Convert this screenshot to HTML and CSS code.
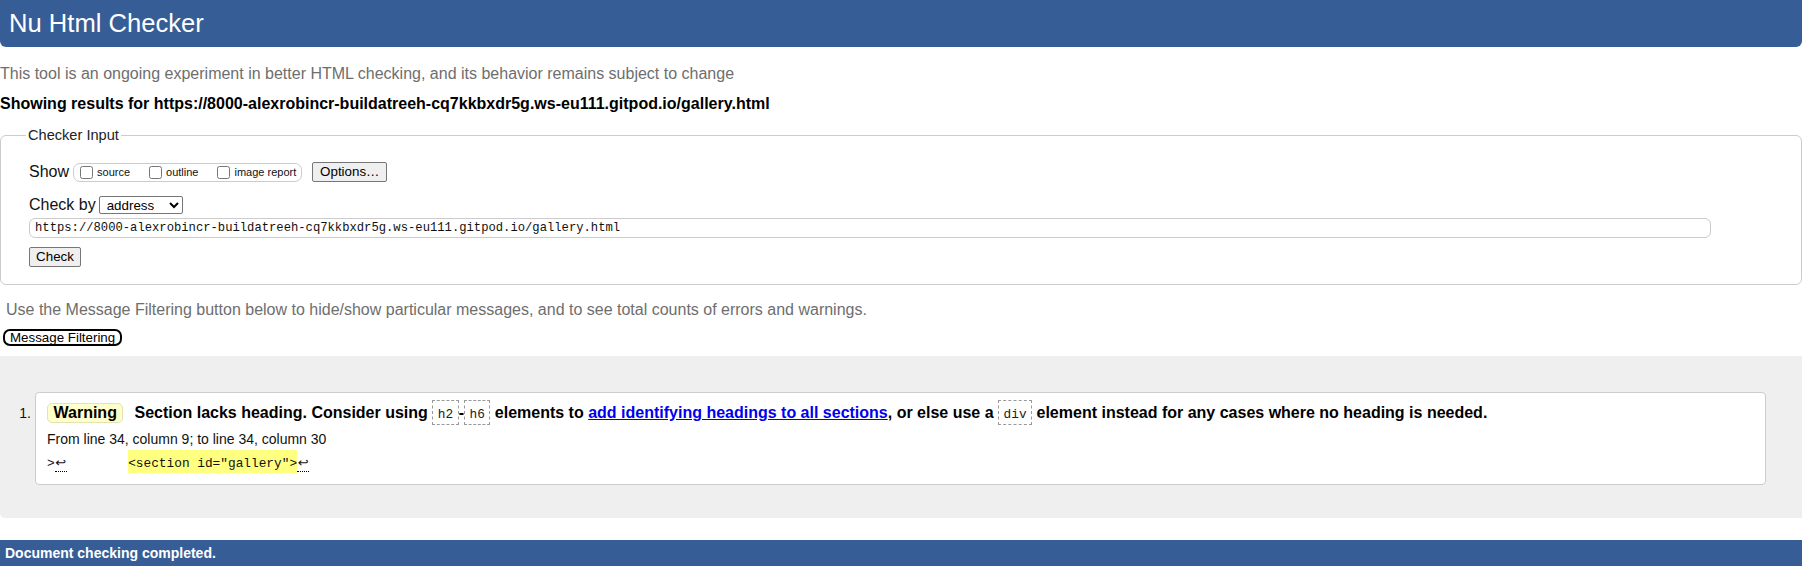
FILE: index.html
```html
<!DOCTYPE html>
<html lang="en">
<head>
<meta charset="utf-8">
<title>Showing results for gallery.html - Nu Html Checker</title>
<link rel="stylesheet" href="styles.css">
</head>
<body>
<h1 class="brand">Nu Html Checker</h1>
<p class="intro">This tool is an ongoing experiment in better HTML checking, and its behavior remains subject to change</p>
<p class="results-for">Showing results for https://8000-alexrobincr-buildatreeh-cq7kkbxdr5g.ws-eu111.gitpod.io/gallery.html</p>
<form class="checker" action="#">
  <fieldset class="checker-input">
    <legend class="legend">Checker Input</legend>
    <div class="row row-show">
      <span class="row-label">Show</span>
      <span class="show-group">
        <label class="opt"><input type="checkbox" class="cb"><span>source</span></label>
        <label class="opt"><input type="checkbox" class="cb"><span>outline</span></label>
        <label class="opt"><input type="checkbox" class="cb"><span>image report</span></label>
      </span>
      <button type="button" class="btn btn-options">Options…</button>
    </div>
    <div class="row row-by">
      <span class="row-label">Check by</span>
      <select class="by-select"><option>address</option></select>
    </div>
    <input class="url" type="text" value="https://8000-alexrobincr-buildatreeh-cq7kkbxdr5g.ws-eu111.gitpod.io/gallery.html">
    <button type="button" class="btn btn-check">Check</button>
  </fieldset>
</form>
<p class="filter-note">Use the Message Filtering button below to hide/show particular messages, and to see total counts of errors and warnings.</p>
<button type="button" class="filter-btn">Message Filtering</button>
<section class="results">
  <ol class="messages">
    <li class="message-row">
      <span class="num">1.</span>
      <div class="message">
        <p class="msg"><strong class="badge">Warning</strong> <span>Section lacks heading. Consider using <code class="code">h2</code>-<code class="code">h6</code> elements to <a class="link" href="#">add identifying headings to all sections</a>, or else use a <code class="code">div</code> element instead for any cases where no heading is needed.</span></p>
        <p class="loc">From line 34, column 9; to line 34, column 30</p>
        <p class="extract"><code class="extract-code">&gt;<span class="lf">↩</span>        <mark class="hl">&lt;section id="gallery"&gt;</mark><span class="lf">↩</span></code></p>
      </div>
    </li>
  </ol>
</section>
<p class="footer">Document checking completed.</p>
</body>
</html>
```
FILE: styles.css
```css
html, body {
  margin: 0;
  padding: 0;
}

body {
  font-family: "Liberation Sans", Arial, sans-serif;
  color: #000;
  background: #fff;
  overflow: hidden;
}

.brand {
  margin: 0;
  height: 47px;
  line-height: 47px;
  padding: 0 9px;
  font-size: 25.6px;
  font-weight: normal;
  color: #fff;
  background: #365d95;
  border-radius: 0 0 6px 6px;
}

.intro {
  margin: 18px 0 0;
  font-size: 16px;
  line-height: 18px;
  color: #6e6e6e;
}

.results-for {
  margin: 12px 0 0;
  font-size: 16px;
  line-height: 18px;
  font-weight: bold;
}

.checker {
  margin: 14px 0 0;
}

.checker-input {
  margin: 0;
  padding: 18px 28px 17px;
  border: 1px solid #ccc;
  border-radius: 6px;
  min-width: 0;
}

.legend {
  margin-left: -3px;
  padding: 0 2px;
  font-size: 14.6px;
  line-height: 17px;
  color: #222;
}

.row {
  display: flex;
  align-items: center;
}

.row-show {
  height: 20px;
}

.row-by {
  height: 18px;
  margin-top: 14px;
}

.row-label {
  font-size: 16px;
  line-height: 18px;
  color: #111;
}

.show-group {
  display: inline-flex;
  align-items: center;
  gap: 19px;
  box-sizing: border-box;
  height: 19px;
  margin-left: 4px;
  padding: 0 5px 0 6px;
  border: 1px solid #ccc;
  border-radius: 7px;
}

.opt {
  display: inline-flex;
  align-items: center;
  gap: 4px;
  font-size: 11px;
  line-height: 13px;
  color: #111;
}

.cb {
  width: 13px;
  height: 13px;
  margin: 0;
}

.btn {
  box-sizing: border-box;
  height: 20px;
  padding: 0 6px;
  font-family: "Liberation Sans", Arial, sans-serif;
  font-size: 13.33px;
  line-height: 16px;
  color: #000;
  background: #efefef;
  border: 1px solid #767676;
  border-radius: 2px;
}

.btn-options {
  width: 75px;
  margin-left: 10px;
}

.by-select {
  box-sizing: border-box;
  width: 84px;
  height: 18px;
  margin-left: 3px;
  padding: 0 0 0 3px;
  font-family: "Liberation Sans", Arial, sans-serif;
  font-size: 13.33px;
  color: #000;
  background: #fff;
  border: 1px solid #767676;
  border-radius: 2px;
}

.url {
  display: block;
  box-sizing: border-box;
  width: calc(100% - 62px);
  height: 20px;
  margin: 4px 0 0;
  padding: 0 5px;
  font-family: "Liberation Mono", "DejaVu Sans Mono", monospace;
  font-size: 12.2px;
  color: #111;
  border: 1px solid #ccc;
  border-radius: 6px;
  background: #fff;
}

.btn-check {
  display: block;
  width: 52px;
  margin-top: 9px;
}

.filter-note {
  margin: 16px 0 0;
  padding-left: 6px;
  font-size: 16px;
  line-height: 18px;
  color: #6e6e6e;
}

.filter-btn {
  display: block;
  box-sizing: border-box;
  height: 17px;
  margin: 10px 0 0 3px;
  padding: 0 5px;
  font-family: "Liberation Sans", Arial, sans-serif;
  font-size: 13.33px;
  line-height: 13px;
  color: #000;
  background: #fff;
  border: 2px solid #000;
  border-radius: 7px;
}

.results {
  margin-top: 10px;
  padding: 36px 36px 33px 0;
  background: #efefef;
  border-radius: 0 0 0 5px;
}

.messages {
  margin: 0;
  padding: 0;
  list-style: none;
}

.message-row {
  display: flex;
  align-items: baseline;
}

.num {
  box-sizing: border-box;
  flex: 0 0 35px;
  padding-right: 4px;
  text-align: right;
  font-size: 14px;
  color: #111;
}

.message {
  flex: 1;
  padding: 7px 11px 11px;
  background: #fff;
  border: 1px solid #ccc;
  border-radius: 4px;
}

.msg {
  margin: 0;
  font-size: 16px;
  line-height: 25px;
  font-weight: bold;
  color: #000;
}

.badge {
  display: inline-block;
  margin-right: 6.6px;
  padding: 0 5.5px;
  line-height: 18px;
  background: #ffffcc;
  border: 1px solid #e2e2b4;
  border-radius: 5px;
}

.code {
  display: inline-block;
  padding: 5px 4.5px 1px;
  font-family: "Liberation Mono", "DejaVu Sans Mono", monospace;
  font-size: 12.8px;
  font-weight: normal;
  line-height: 17px;
  color: #222;
  border: 1px dashed #999;
}

.link {
  color: #0000ee;
  text-decoration: underline;
}

.loc {
  margin: 5px 0 0;
  font-size: 14px;
  line-height: 18px;
  color: #111;
}

.extract {
  margin: 2px 0 0;
  line-height: 19px;
  white-space: pre;
}

.extract-code {
  font-family: "Liberation Mono", "DejaVu Sans Mono", monospace;
  font-size: 12.8px;
  color: #111;
}

.hl {
  display: inline-block;
  padding-top: 4px;
  line-height: 19px;
  color: #111;
  background: #ffff80;
}

.lf {
  display: inline-block;
  width: 12px;
  padding-bottom: 1px;
  font-family: "DejaVu Sans", sans-serif;
  font-size: 13px;
  line-height: 14px;
  text-align: center;
  border-bottom: 1px dotted #000;
}

.footer {
  margin: 22px 0 0;
  padding: 4px 5px;
  font-size: 14px;
  line-height: 18px;
  font-weight: bold;
  color: #fff;
  background: #365d95;
}
```
